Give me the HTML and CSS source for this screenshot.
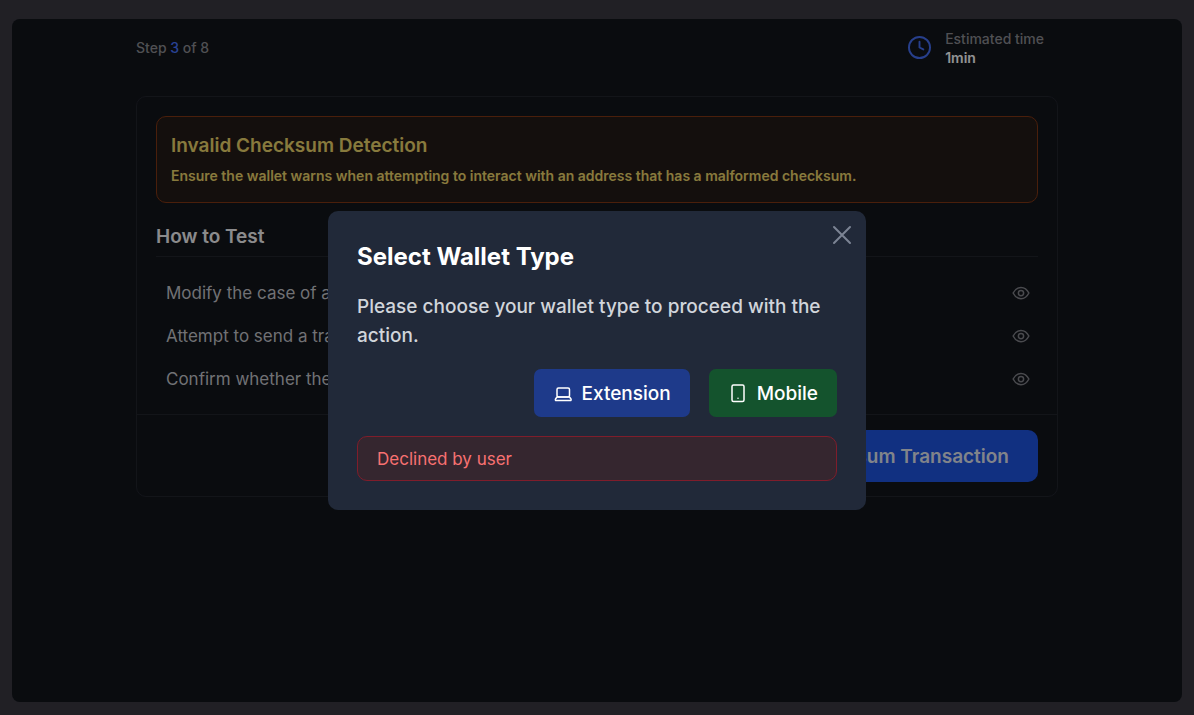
FILE: index.html
```html
<!DOCTYPE html>
<html lang="en">
  <head>
    <meta charset="UTF-8" />
    <meta name="viewport" content="width=device-width, initial-scale=1.0" />
    <title>Invalid Checksum Detection</title>
    <link rel="stylesheet" href="styles.css">
  </head>
  <body>
    <div class="frame">
      <main class="content">
        <header class="topbar">
          <p class="step">Step <span class="step-current">3</span> of 8</p>
          <div class="estimate">
            <svg class="clock" viewBox="0 0 24 24" aria-hidden="true">
              <circle cx="12" cy="12" r="11" />
              <path d="M12 6v6l4 2" />
            </svg>
            <div>
              <div class="estimate-label">Estimated time</div>
              <div class="estimate-value">1min</div>
            </div>
          </div>
        </header>

        <section class="card">
          <div class="card-body">
            <div class="notice">
              <h1>Invalid Checksum Detection</h1>
              <p>Ensure the wallet warns when attempting to interact with an address that has a malformed checksum.</p>
            </div>
            <h2>How to Test</h2>
            <ul class="steps">
              <li>
                <span>Modify the case of an address</span>
                <button type="button" class="eye" aria-label="Show details">
                  <svg viewBox="0 0 24 24" aria-hidden="true">
                    <path d="M1.5 12C4 7 7.5 4.5 12 4.5S20 7 22.5 12C20 17 16.5 19.5 12 19.5S4 17 1.5 12Z" />
                    <circle cx="12" cy="12" r="3.5" />
                  </svg>
                </button>
              </li>
              <li>
                <span>Attempt to send a transaction</span>
                <button type="button" class="eye" aria-label="Show details">
                  <svg viewBox="0 0 24 24" aria-hidden="true">
                    <path d="M1.5 12C4 7 7.5 4.5 12 4.5S20 7 22.5 12C20 17 16.5 19.5 12 19.5S4 17 1.5 12Z" />
                    <circle cx="12" cy="12" r="3.5" />
                  </svg>
                </button>
              </li>
              <li>
                <span>Confirm whether the wallet warns</span>
                <button type="button" class="eye" aria-label="Show details">
                  <svg viewBox="0 0 24 24" aria-hidden="true">
                    <path d="M1.5 12C4 7 7.5 4.5 12 4.5S20 7 22.5 12C20 17 16.5 19.5 12 19.5S4 17 1.5 12Z" />
                    <circle cx="12" cy="12" r="3.5" />
                  </svg>
                </button>
              </li>
            </ul>
          </div>
          <footer class="card-footer">
            <button type="button" class="send">Send Checksum Transaction</button>
          </footer>
        </section>
      </main>

      <div class="overlay">
        <div class="modal" role="dialog" aria-modal="true" aria-labelledby="modal-title">
          <button type="button" class="close" aria-label="Close">
            <svg viewBox="0 0 20 20" aria-hidden="true">
              <path d="M2 2l16 16M18 2L2 18" />
            </svg>
          </button>
          <h2 id="modal-title">Select Wallet Type</h2>
          <p class="modal-text">Please choose your wallet type to proceed with the action.</p>
          <div class="actions">
            <button type="button" class="btn extension">
              <svg viewBox="0 0 20 20" aria-hidden="true">
                <rect x="4" y="5" width="12.5" height="9" rx="1.5" />
                <path d="M4 14l-1.5 2c-.4.8 0 1.500.7 1.500h14.100c.7 0 1.100-.7.700-1.500l-1.500-2z" />
              </svg>
              Extension
            </button>
            <button type="button" class="btn mobile">
              <svg viewBox="0 0 20 20" aria-hidden="true">
                <rect x="4" y="2" width="12" height="16.5" rx="1.5" />
                <path d="M10 15.2v.1" />
              </svg>
              Mobile
            </button>
          </div>
          <div class="error" role="alert">Declined by user</div>
        </div>
      </div>
    </div>
  </body>
</html>
```
FILE: styles.css
```css
* {
  box-sizing: border-box;
}
body {
  display: flex;
  min-height: 100vh;
  margin: 0;
  padding: 19px 12px 13px;
  background-color: #212025;
  color: #fff;
  font-family: Inter, 'Liberation Sans', sans-serif;
}
h1,
h2,
p,
ul {
  margin: 0;
  padding: 0;
}
button {
  border: none;
  font-family: inherit;
  cursor: pointer;
}
svg {
  display: block;
  flex: none;
  fill: none;
  stroke: currentColor;
  stroke-linecap: round;
  stroke-linejoin: round;
}
.frame {
  position: relative;
  flex: 1;
  border-radius: 8px;
  background-color: #11141a;
  overflow: hidden;
}
.content {
  max-width: 922px;
  margin: 0 auto;
}
.topbar {
  display: flex;
  justify-content: space-between;
  align-items: center;
  height: 57px;
  padding-right: 14px;
}
.step {
  font-size: 14px;
  font-weight: 500;
  color: #85868b;
}
.step-current {
  color: #4570f5;
}
.estimate {
  display: flex;
  align-items: center;
  gap: 14px;
  font-size: 14px;
  font-weight: 500;
  line-height: 19px;
}
.clock {
  width: 23px;
  height: 23px;
  color: #4169e8;
  stroke-width: 2;
}
.estimate-label {
  color: #85868b;
}
.estimate-value {
  font-weight: 600;
  color: #f3f4f6;
}
.card {
  margin-top: 20px;
  border: 1px solid #20232b;
  border-radius: 10px;
}
.card-body {
  padding: 19px 19px 14px;
}
.notice {
  padding: 14px;
  border: 1px solid #7c3413;
  border-radius: 10px;
  background-color: #221a16;
  color: #e2cb66;
}
.notice h1 {
  font-size: 19px;
  font-weight: 600;
  line-height: 29px;
}
.notice p {
  margin-top: 4px;
  font-size: 14px;
  font-weight: 600;
  line-height: 24px;
}
.card h2 {
  padding: 20px 0 5px;
  border-bottom: 1px solid #20232b;
  font-size: 19px;
  font-weight: 600;
  line-height: 28px;
  color: #e8e8ea;
}
.steps {
  margin-top: 14px;
  list-style: none;
}
.steps li {
  display: flex;
  justify-content: space-between;
  align-items: center;
  height: 43px;
  padding: 0 8px 0 10px;
  font-size: 17px;
  color: #bcbdc1;
}
.eye {
  padding: 0;
  background: none;
  color: #7c7d83;
}
.eye svg {
  width: 18px;
  height: 18px;
  stroke-width: 2;
}
.card-footer {
  display: flex;
  justify-content: flex-end;
  padding: 15px 19px 14px;
  border-top: 1px solid #20232b;
}
.send {
  height: 52px;
  padding: 0 29px;
  border-radius: 10px;
  background-color: #1d50d8;
  color: #d8dce6;
  font-size: 19px;
  font-weight: 600;
}
.overlay {
  position: absolute;
  inset: 0;
  display: flex;
  justify-content: center;
  align-items: center;
  background-color: rgba(0, 0, 0, 0.4);
}
.modal {
  position: relative;
  width: 100%;
  max-width: 538px;
  padding: 29px;
  border-radius: 10px;
  background-color: #212939;
}
.close {
  position: absolute;
  top: 14px;
  right: 14px;
  padding: 0;
  background: none;
  color: #7c8494;
}
.close svg {
  width: 20px;
  height: 20px;
  stroke-width: 2;
}
.modal h2 {
  font-size: 24px;
  font-weight: 700;
  line-height: 34px;
}
.modal-text {
  margin-top: 18px;
  font-size: 19px;
  font-weight: 500;
  line-height: 29px;
  color: #d1d5db;
}
.actions {
  display: flex;
  justify-content: flex-end;
  gap: 19px;
  margin-top: 19px;
}
.btn {
  display: flex;
  align-items: center;
  gap: 9px;
  height: 48px;
  padding: 0 19px;
  border-radius: 7px;
  color: #fff;
  font-size: 19px;
  font-weight: 500;
}
.btn svg {
  width: 20px;
  height: 20px;
  stroke-width: 1.5;
}
.extension {
  background-color: #1e3a8a;
}
.mobile {
  background-color: #14532d;
}
.error {
  margin-top: 19px;
  padding: 10px 19px 8px;
  border: 1px solid #7f1d2b;
  border-radius: 10px;
  background-color: #35262f;
  color: #f87171;
  font-size: 17px;
  line-height: 25px;
}
```
